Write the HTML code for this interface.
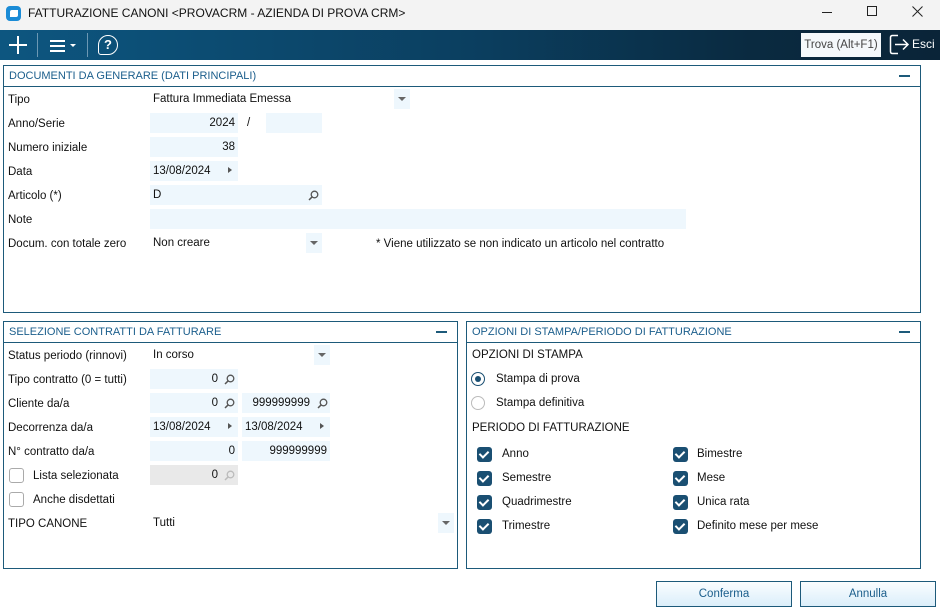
<!DOCTYPE html>
<html><head><meta charset="utf-8"><style>
*{box-sizing:border-box;margin:0;padding:0}
body{width:940px;height:609px;background:#fff;font-family:"Liberation Sans",sans-serif;font-size:11.5px;color:#111;position:relative;overflow:hidden}
.a{position:absolute}
.t{position:absolute;line-height:20px;white-space:nowrap}
.f{position:absolute;background:#eef7fd;height:20px;line-height:20px;padding:0 3px;white-space:nowrap}
.r{text-align:right}
.p{position:absolute;border:1px solid #1d5a7a}
.ph{position:absolute;left:0;right:0;top:0;height:21px;border-bottom:1px solid #1d5a7a;color:#1b5e8c;line-height:20px;padding-left:5px;font-size:11px}
.ph i{position:absolute;right:10px;top:9px;width:11px;height:1.5px;background:#1d5a7a}
.dd{position:absolute;width:16px;height:20px;background:#eef7fd}
.dd:after{content:"";position:absolute;left:4px;top:8px;border-left:4px solid transparent;border-right:4px solid transparent;border-top:4px solid #666}
.arr:after{content:"";position:absolute;right:6px;top:6px;border-top:3.5px solid transparent;border-bottom:3.5px solid transparent;border-left:4px solid #555}
.cb{position:absolute;width:15px;height:15px;border:1px solid #aaa;border-radius:3px;background:#fff}
.ck{position:absolute;width:15px;height:15px;border-radius:3px;background:#1a4f72}
.ck:after{content:"";position:absolute;left:4px;top:2px;width:4px;height:7px;border:solid #fff;border-width:0 2px 2px 0;transform:rotate(45deg)}
.btn{position:absolute;height:26px;border:1px solid #1d5a7a;background:linear-gradient(#fafdff,#dbeefa);color:#1b5e8c;text-align:center;line-height:24px}
.s{position:absolute;width:11px;height:11px}
</style></head><body>
<svg width="0" height="0" style="position:absolute"><defs><symbol id="mg" viewBox="0 0 11 11"><circle cx="6.5" cy="4.5" r="3.3" fill="none" stroke="currentColor" stroke-width="1.3"/><path d="M4.2 6.8L1 10" stroke="currentColor" stroke-width="1.5"/></symbol></defs></svg>
<!-- title -->
<div class="a" style="left:0;top:0;width:940px;height:30px;background:#f3f3f3"></div>
<div class="a" style="left:6px;top:6px;width:15px;height:15px;background:#1a8bd6;border-radius:4px"></div>
<div class="a" style="left:10px;top:10px;width:8px;height:7px;background:#fff;border-radius:2px 0 2px 0"></div>
<div class="t" style="left:28px;top:3px;font-size:12px">FATTURAZIONE CANONI &lt;PROVACRM - AZIENDA DI PROVA CRM&gt;</div>
<div class="a" style="left:822px;top:12px;width:10px;height:1px;background:#222"></div>
<div class="a" style="left:867px;top:6px;width:10px;height:10px;border:1px solid #222"></div>
<svg class="a" style="left:912px;top:6px" width="11" height="11"><path d="M0.5 0.5L10.5 10.5M10.5 0.5L0.5 10.5" stroke="#222" stroke-width="1"/></svg>
<!-- toolbar -->
<div class="a" style="left:0;top:30px;width:940px;height:30px;background:linear-gradient(90deg,#0d5680,#0b3f60 50%,#0a2a40 80%,#0a2438)"></div>
<div class="a" style="left:9px;top:44px;width:18px;height:1.5px;background:#fff"></div>
<div class="a" style="left:17px;top:36px;width:1.5px;height:18px;background:#fff"></div>
<div class="a" style="left:37px;top:33px;width:1px;height:24px;background:#6c98b4"></div>
<div class="a" style="left:50px;top:40px;width:15px;height:1.5px;background:#fff;box-shadow:0 5px 0 #fff,0 10px 0 #fff"></div>
<div class="a" style="left:70px;top:44px;border-left:3px solid transparent;border-right:3px solid transparent;border-top:3px solid #fff"></div>
<div class="a" style="left:87px;top:33px;width:1px;height:24px;background:#6c98b4"></div>
<div class="a" style="left:98px;top:35px;width:20px;height:20px;border:1.5px solid #fff;border-radius:10px 10px 10px 3px;color:#fff;text-align:center;line-height:17px;font-weight:bold;font-size:13px">?</div>
<div class="a" style="left:801px;top:33px;width:80px;height:24px;background:#f4f8fb;color:#444;line-height:24px;text-align:center;font-size:11.5px">Trova (Alt+F1)</div>
<svg class="a" style="left:889px;top:34px" width="22" height="22"><path d="M9 1.5H3.5Q1.5 1.5 1.5 3.5V17.5Q1.5 19.5 3.5 19.5H9" fill="none" stroke="#fff" stroke-width="1.5"/><path d="M6 10.5H19M14 5.5L19 10.5L14 15.5" fill="none" stroke="#fff" stroke-width="1.5"/></svg>
<div class="t" style="left:912px;top:34px;color:#fff;font-size:12px">Esci</div>
<!-- panel 1 -->
<div class="p" style="left:3px;top:65px;width:918px;height:248px"><div class="ph">DOCUMENTI DA GENERARE (DATI PRINCIPALI)<i></i></div></div>
<div class="t" style="left:8px;top:90px">Tipo</div>
<div class="t" style="left:153px;top:89px">Fattura Immediata Emessa</div>
<div class="dd" style="left:394px;top:89px"></div>
<div class="t" style="left:8px;top:114px">Anno/Serie</div>
<div class="f r" style="left:150px;top:113px;width:88px">2024</div>
<div class="t" style="left:247px;top:113px">/</div>
<div class="f" style="left:266px;top:113px;width:56px"></div>
<div class="t" style="left:8px;top:138px">Numero iniziale</div>
<div class="f r" style="left:150px;top:137px;width:88px">38</div>
<div class="t" style="left:8px;top:162px">Data</div>
<div class="f arr" style="left:150px;top:161px;width:88px">13/08/2024</div>
<div class="t" style="left:8px;top:186px">Articolo (*)</div>
<div class="f" style="left:150px;top:185px;width:172px">D</div>
<svg class="s" style="left:308px;top:190px;color:#555"><use href="#mg"/></svg>
<div class="t" style="left:8px;top:210px">Note</div>
<div class="f" style="left:150px;top:209px;width:536px"></div>
<div class="t" style="left:8px;top:234px">Docum. con totale zero</div>
<div class="t" style="left:153px;top:233px">Non creare</div>
<div class="dd" style="left:306px;top:233px"></div>
<div class="t" style="left:376px;top:234px">* Viene utilizzato se non indicato un articolo nel contratto</div>
<!-- panel 2 -->
<div class="p" style="left:3px;top:321px;width:455px;height:248px"><div class="ph">SELEZIONE CONTRATTI DA FATTURARE<i></i></div></div>
<div class="t" style="left:8px;top:346px">Status periodo (rinnovi)</div>
<div class="t" style="left:153px;top:345px">In corso</div>
<div class="dd" style="left:314px;top:345px"></div>
<div class="t" style="left:8px;top:370px">Tipo contratto (0 = tutti)</div>
<div class="f r" style="left:150px;top:369px;width:88px;padding-right:20px">0</div>
<div class="t" style="left:8px;top:394px">Cliente da/a</div>
<div class="f r" style="left:150px;top:393px;width:88px;padding-right:20px">0</div>
<div class="f r" style="left:242px;top:393px;width:88px;padding-right:20px">999999999</div>
<div class="t" style="left:8px;top:418px">Decorrenza da/a</div>
<div class="f arr" style="left:150px;top:417px;width:88px">13/08/2024</div>
<div class="f arr" style="left:242px;top:417px;width:88px">13/08/2024</div>
<div class="t" style="left:8px;top:442px">N° contratto da/a</div>
<div class="f r" style="left:150px;top:441px;width:88px">0</div>
<div class="f r" style="left:242px;top:441px;width:88px">999999999</div>
<div class="cb" style="left:9px;top:468px"></div>
<div class="t" style="left:33px;top:466px">Lista selezionata</div>
<div class="f r" style="left:150px;top:465px;width:88px;background:#e9e9e9;padding-right:20px">0</div>
<div class="cb" style="left:9px;top:492px"></div>
<div class="t" style="left:33px;top:490px">Anche disdettati</div>
<div class="t" style="left:8px;top:514px">TIPO CANONE</div>
<div class="t" style="left:153px;top:513px">Tutti</div>
<div class="dd" style="left:438px;top:513px"></div>
<svg class="s" style="left:224px;top:374px;color:#555"><use href="#mg"/></svg>
<svg class="s" style="left:224px;top:398px;color:#555"><use href="#mg"/></svg>
<svg class="s" style="left:317px;top:398px;color:#555"><use href="#mg"/></svg>
<svg class="s" style="left:224px;top:470px;color:#bbb"><use href="#mg"/></svg>
<!-- panel 3 -->
<div class="p" style="left:466px;top:321px;width:455px;height:248px"><div class="ph">OPZIONI DI STAMPA/PERIODO DI FATTURAZIONE<i></i></div></div>
<div class="t" style="left:472px;top:345px">OPZIONI DI STAMPA</div>
<div class="a" style="left:471px;top:372px;width:14px;height:14px;border:1px solid #1a4f72;border-radius:50%"></div>
<div class="a" style="left:475px;top:376px;width:6px;height:6px;background:#1a4f72;border-radius:50%"></div>
<div class="t" style="left:496px;top:369px">Stampa di prova</div>
<div class="a" style="left:471px;top:396px;width:14px;height:14px;border:1px solid #bbb;border-radius:50%"></div>
<div class="t" style="left:496px;top:393px">Stampa definitiva</div>
<div class="t" style="left:472px;top:418px">PERIODO DI FATTURAZIONE</div>
<div class="ck" style="left:477px;top:447px"></div><div class="t" style="left:502px;top:444px">Anno</div>
<div class="ck" style="left:477px;top:471px"></div><div class="t" style="left:502px;top:468px">Semestre</div>
<div class="ck" style="left:477px;top:495px"></div><div class="t" style="left:502px;top:492px">Quadrimestre</div>
<div class="ck" style="left:477px;top:519px"></div><div class="t" style="left:502px;top:516px">Trimestre</div>
<div class="ck" style="left:673px;top:447px"></div><div class="t" style="left:697px;top:444px">Bimestre</div>
<div class="ck" style="left:673px;top:471px"></div><div class="t" style="left:697px;top:468px">Mese</div>
<div class="ck" style="left:673px;top:495px"></div><div class="t" style="left:697px;top:492px">Unica rata</div>
<div class="ck" style="left:673px;top:519px"></div><div class="t" style="left:697px;top:516px">Definito mese per mese</div>
<!-- buttons -->
<div class="btn" style="left:656px;top:581px;width:136px">Conferma</div>
<div class="btn" style="left:800px;top:581px;width:136px">Annulla</div>
</body></html>
